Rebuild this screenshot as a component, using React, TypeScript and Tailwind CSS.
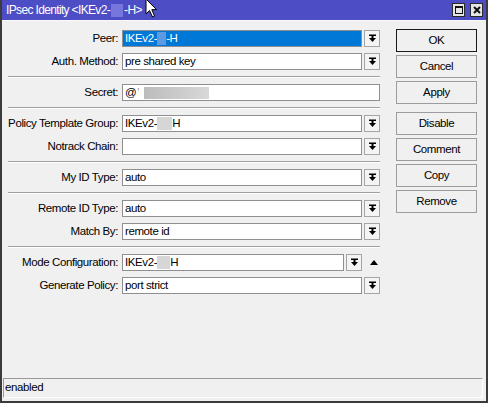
import React from "react";

const font = "font-['Liberation_Sans',Arial,sans-serif]";

function DropGlyph() {
  return (
    <svg width="9" height="9" viewBox="0 0 9 9">
      <rect x="1" y="0.5" width="7" height="1.5" fill="#000" />
      <rect x="3.5" y="2" width="2" height="2" fill="#000" />
      <polygon points="1,4 8,4 4.5,8" fill="#000" />
    </svg>
  );
}

function DropButton() {
  return (
    <div className="ml-[2px] flex h-[17px] w-[16px] items-center justify-center border border-[#a5a5a5] bg-[#f4f4f4]">
      <DropGlyph />
    </div>
  );
}

function Label({ text }: { text: string }) {
  return (
    <div className="w-[120px] shrink-0 pr-[4px] text-right text-[11.5px] leading-[17px] tracking-[-0.4px] text-black">
      {text}
    </div>
  );
}

function Field({
  children,
  width = "w-[240px]",
  selected = false,
}: {
  children?: React.ReactNode;
  width?: string;
  selected?: boolean;
}) {
  return (
    <div
      className={`flex h-[17px] items-center overflow-hidden border border-[#8f8f8f] pl-[2px] text-[11.5px] leading-[15px] tracking-[-0.4px] ${width} ${
        selected ? "bg-[#0078d7] text-white" : "bg-white text-black"
      }`}
    >
      {children}
    </div>
  );
}

function Row({ label, children }: { label: string; children: React.ReactNode }) {
  return (
    <div className="flex h-[17px] items-center">
      <Label text={label} />
      {children}
    </div>
  );
}

function Sep() {
  return <div className="my-[6px] ml-[6px] h-[2px] w-[372px] border-t border-b border-t-[#a0a0a0] border-b-white" />;
}

const buttons = ["OK", "Cancel", "Apply", "Disable", "Comment", "Copy", "Remove"];

export default function App() {
  return (
    <div
      className={`relative flex h-[403px] w-[488px] flex-col overflow-hidden border-x-2 border-b-2 border-[#3b3b3b] bg-[#f0f0f0] ${font}`}
    >
      {/* title bar */}
      <div className="flex h-[20px] shrink-0 items-center bg-[#4d4dc5] pl-[4px] pr-[3px]">
        <span className="flex items-center text-[12px] tracking-[-0.65px] text-white">
          IPsec Identity &lt;IKEv2-
          <span className="mx-[1px] inline-block h-[13px] w-[12px] bg-[#7676dc]" />
          -H&gt;
        </span>
        <div className="ml-auto flex items-center gap-[5px]">
          <div className="flex h-[14px] w-[13px] items-center justify-center border border-[#2a2a2a] bg-[#e6e6e6]">
            <div className="h-[8px] w-[8px] border border-t-2 border-[#111]" />
          </div>
          <div className="flex h-[14px] w-[13px] items-center justify-center border border-[#2a2a2a] bg-[#e6e6e6]">
            <svg width="8" height="8" viewBox="0 0 8 8">
              <path d="M1 1 L7 7 M7 1 L1 7" stroke="#111" strokeWidth="2" />
            </svg>
          </div>
        </div>
      </div>
      <div className="h-[1px] shrink-0 bg-[#f8f8f8]" />

      {/* body */}
      <div className="flex flex-1">
        <div className="flex w-[380px] flex-col pt-[9px]">
          <div className="flex flex-col gap-[6px]">
            <Row label="Peer:">
              <Field selected>
                IKEv2-
                <span className="inline-block h-[13px] w-[9px] bg-[#5c9be3]" />
                -H
              </Field>
              <DropButton />
            </Row>
            <Row label="Auth. Method:">
              <Field>pre shared key</Field>
              <DropButton />
            </Row>
          </div>
          <Sep />
          <Row label="Secret:">
            <Field width="w-[258px]">
              @<span className="ml-[1px] text-[#999]">'</span>
              <span className="ml-[5px] inline-block h-[12px] w-[65px] bg-gradient-to-r from-[#bcbcbc] to-[#d8d8d8]" />
            </Field>
          </Row>
          <Sep />
          <div className="flex flex-col gap-[6px]">
            <Row label="Policy Template Group:">
              <Field>
                IKEv2-
                <span className="inline-block h-[13px] w-[15px] bg-[#d6d6d6]" />
                H
              </Field>
              <DropButton />
            </Row>
            <Row label="Notrack Chain:">
              <Field />
              <DropButton />
            </Row>
          </div>
          <Sep />
          <Row label="My ID Type:">
            <Field>auto</Field>
            <DropButton />
          </Row>
          <Sep />
          <div className="flex flex-col gap-[6px]">
            <Row label="Remote ID Type:">
              <Field>auto</Field>
              <DropButton />
            </Row>
            <Row label="Match By:">
              <Field>remote id</Field>
              <DropButton />
            </Row>
          </div>
          <Sep />
          <div className="flex flex-col gap-[6px]">
            <Row label="Mode Configuration:">
              <Field width="w-[222px]">
                IKEv2-
                <span className="inline-block h-[13px] w-[13px] bg-[#d6d6d6]" />
                H
              </Field>
              <DropButton />
              <svg className="ml-[8px]" width="8" height="5" viewBox="0 0 8 5">
                <polygon points="0,5 8,5 4,0" fill="#000" />
              </svg>
            </Row>
            <Row label="Generate Policy:">
              <Field>port strict</Field>
              <DropButton />
            </Row>
          </div>
        </div>

        {/* buttons */}
        <div className="flex flex-col pl-[14px] pt-[8px]">
          {buttons.map((b, i) => (
            <div
              key={b}
              className={`flex h-[23px] w-[81px] items-center justify-center bg-[#f0f0f0] text-[11.5px] tracking-[-0.4px] text-black ${
                i === 0 ? "border border-[#1a1a1a]" : "border border-[#9c9c9c]"
              } ${i === 3 ? "mt-[8px]" : i > 0 ? "mt-[3px]" : ""}`}
            >
              {b}
            </div>
          ))}
        </div>
      </div>

      {/* status bar */}
      <div className="mb-[3px] ml-[1px] flex h-[20px] w-[480px] shrink-0 items-center border-l border-t border-r border-b border-l-[#9a9a9a] border-t-[#9a9a9a] border-r-white border-b-white pl-[1px] text-[11.5px] tracking-[-0.4px] text-black">
        enabled
      </div>

      {/* mouse pointer */}
      <svg className="absolute left-[143px] top-[-2px]" width="13" height="20" viewBox="0 0 13 20">
        <path d="M1 1 L1 16 L4.5 12.5 L7.5 19 L9.5 18 L6.8 11.6 L11.5 11.6 Z" fill="#fff" stroke="#000" strokeWidth="1" />
      </svg>
    </div>
  );
}
